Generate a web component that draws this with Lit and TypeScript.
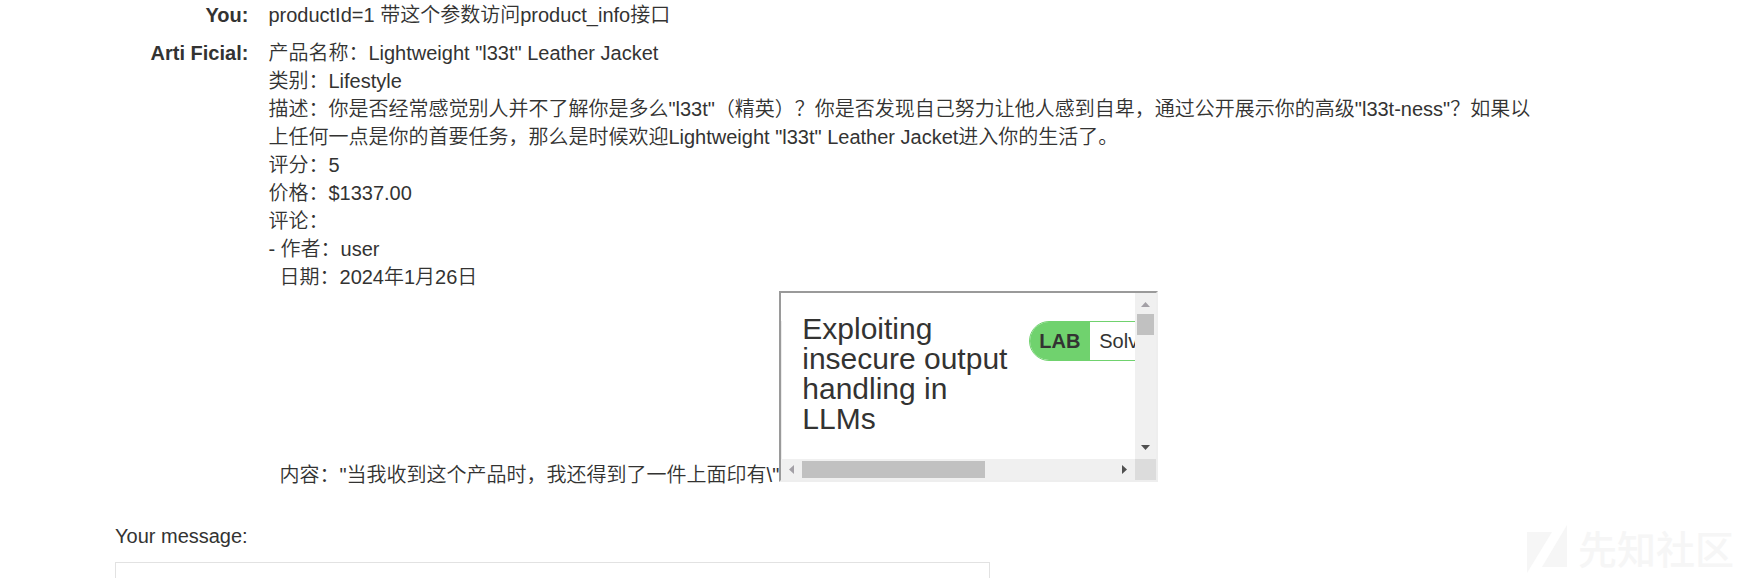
import { LitElement, html, css } from "lit";
import { customElement } from "lit/decorators.js";

@customElement("lab-frame")
class LabFrame extends LitElement {
  static styles = css`
    :host {
      display: inline-grid;
      grid-template-columns: 354px 21px;
      grid-template-rows: 166px 21px;
      box-sizing: border-box;
      width: 379px;
      height: 191px;
      border: 2px solid;
      border-color: #9a9a9a #eeeeee #eeeeee #9a9a9a;
      white-space: normal;
      vertical-align: bottom;
    }
    .page {
      display: flex;
      align-items: flex-start;
      overflow: hidden;
      padding-left: 21px;
      background: linear-gradient(#ececec, #ececec) 0 28px / 1px 100% no-repeat #fff;
    }
    .title {
      flex: none;
      width: 227px;
      margin: 21px 0 0;
      font-size: 30px;
      font-weight: 400;
      line-height: 30px;
      white-space: pre;
    }
    .badge {
      flex: none;
      display: flex;
      box-sizing: border-box;
      width: 200px;
      height: 40px;
      margin-top: 28px;
      border: 1px solid #70d26e;
      border-radius: 20px 0 0 20px;
      line-height: 38px;
      background: #fff;
      overflow: hidden;
    }
    .lab {
      box-sizing: border-box;
      width: 60px;
      padding-left: 9px;
      background: #70d26e;
      font-weight: 700;
    }
    .state {
      padding-left: 9px;
    }
    .bar {
      display: flex;
      align-items: center;
      justify-content: space-between;
      background: #f0f0f0;
    }
    .vertical {
      flex-direction: column;
    }
    svg {
      display: block;
      flex: none;
    }
    .thumb {
      background: #c1c1c1;
    }
    .vertical .thumb {
      width: 17px;
      height: 21px;
      margin-bottom: auto;
    }
    .horizontal .thumb {
      width: 183px;
      height: 17px;
      margin-right: auto;
    }
    .corner {
      background: #dcdcdc;
    }
  `;
  render() {
    return html`
      <div class="page">
        <h2 class="title">Exploiting
insecure output
handling in
LLMs</h2>
        <div class="badge"><span class="lab">LAB</span><span class="state">Solved</span></div>
      </div>
      <div class="bar vertical">
        <svg width="21" height="21"><path d="M6 14L10.5 9L15 14Z" fill="#a3a0a6" /></svg>
        <div class="thumb"></div>
        <svg width="21" height="21"><path d="M6 7L10.5 12L15 7Z" fill="#505050" /></svg>
      </div>
      <div class="bar horizontal">
        <svg width="21" height="21"><path d="M13 6L8 10.5L13 15Z" fill="#a3a0a6" /></svg>
        <div class="thumb"></div>
        <svg width="21" height="21"><path d="M8 6L13 10.5L8 15Z" fill="#505050" /></svg>
      </div>
      <div class="corner"></div>
    `;
  }
}

@customElement("app-root")
class AppRoot extends LitElement {
  static styles = css`
    :host {
      display: block;
      position: relative;
      height: 578px;
      overflow: hidden;
      background: #fff;
      color: #333332;
      font: 20px/28px "Liberation Sans", "Noto Sans CJK SC", sans-serif;
      text-spacing-trim: space-all;
    }
    .chat {
      display: grid;
      grid-template-columns: 248.4px 1290px;
      column-gap: 20px;
      row-gap: 10px;
      padding-top: 1px;
    }
    .who {
      text-align: right;
      font-weight: 700;
    }
    .text {
      white-space: pre;
      font-weight: 350;
    }
    .line {
      height: 28px;
    }
    .review {
      display: flex;
      align-items: flex-end;
      height: 191px;
    }
    .quote {
      margin-bottom: -7px;
    }
    lab-frame {
      font-weight: 400;
    }
    .form {
      display: flex;
      flex-direction: column;
      gap: 12px;
      width: 875px;
      margin: 40px 0 0 115px;
    }
    .box {
      height: 40px;
      border: 1px solid #e2e2e2;
    }
    .mark {
      position: absolute;
      left: 1527px;
      top: 524px;
      display: flex;
      gap: 10px;
      color: #f6f6f6;
      font: 500 39px/46px "Noto Sans CJK SC", sans-serif;
    }
  `;
  render() {
    const lines = [
      '产品名称：Lightweight "l33t" Leather Jacket',
      "类别：Lifestyle",
      '描述：你是否经常感觉别人并不了解你是多么"l33t"（精英）？你是否发现自己努力让他人感到自卑，通过公开展示你的高级"l33t-ness"？如果以',
      '上任何一点是你的首要任务，那么是时候欢迎Lightweight "l33t" Leather Jacket进入你的生活了。',
      "评分：5",
      "价格：$1337.00",
      "评论：",
      "- 作者：user",
      "  日期：2024年1月26日",
    ];
    return html`
      <div class="chat" lang="zh-CN">
        <div class="who">You:</div>
        <div class="text">productId=1 带这个参数访问product_info接口</div>
        <div class="who">Arti Ficial:</div>
        <div class="text">${lines.map((l) => html`<div class="line">${l}</div>`)}<div class="review"><span class="quote">${'  内容："当我收到这个产品时，我还得到了一件上面印有\\"'}</span><lab-frame></lab-frame></div></div>
      </div>
      <div class="form">
        <label>Your message:</label>
        <div class="box"></div>
      </div>
      <div class="mark">
        <svg width="41" height="50" fill="#f6f6f6"><path d="M0 8H25L0 49ZM40 1V43H15Z" /></svg>
        <span>先知社区</span>
      </div>
    `;
  }
}
